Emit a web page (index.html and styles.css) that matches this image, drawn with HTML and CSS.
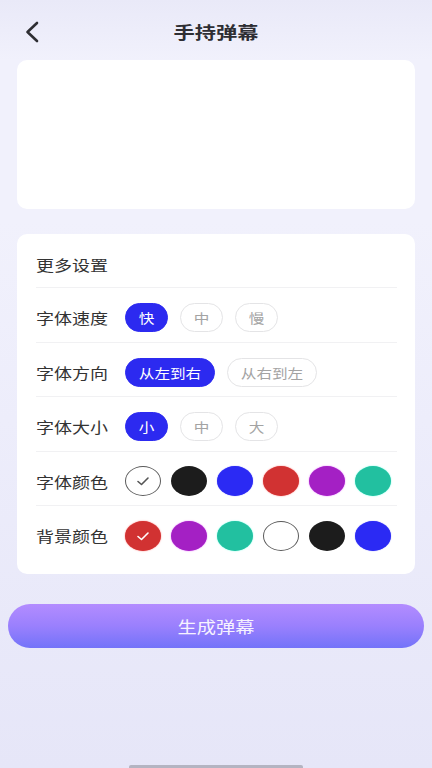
FILE: index.html
```html
<!DOCTYPE html>
<html lang="zh">
<head>
<meta charset="utf-8">
<title>手持弹幕</title>
<link rel="stylesheet" href="styles.css">
</head>
<body>
<div class="page">
  <header class="topbar">
    <div class="back">
      <svg width="16" height="22" viewBox="0 0 16 22"><path d="M13 2 L3.5 11 L13 20" fill="none" stroke="#2e2e33" stroke-width="2.6" stroke-linecap="round" stroke-linejoin="round"/></svg>
    </div>
    <h1 class="title"><span class="wx">手持弹幕</span></h1>
    <div></div>
  </header>

  <section class="card input-card"></section>

  <section class="card settings">
    <div class="settings-head"><span class="wxl">更多设置</span></div>

    <div class="row">
      <div class="label"><span class="wxl">字体速度</span></div>
      <div class="opts">
        <span class="chip on"><span class="wx">快</span></span>
        <span class="chip"><span class="wx">中</span></span>
        <span class="chip"><span class="wx">慢</span></span>
      </div>
    </div>

    <div class="row">
      <div class="label"><span class="wxl">字体方向</span></div>
      <div class="opts">
        <span class="chip long on"><span class="wx">从左到右</span></span>
        <span class="chip long"><span class="wx">从右到左</span></span>
      </div>
    </div>

    <div class="row">
      <div class="label"><span class="wxl">字体大小</span></div>
      <div class="opts">
        <span class="chip on"><span class="wx">小</span></span>
        <span class="chip"><span class="wx">中</span></span>
        <span class="chip"><span class="wx">大</span></span>
      </div>
    </div>

    <div class="row">
      <div class="label"><span class="wxl">字体颜色</span></div>
      <div class="swatches">
        <span class="dot white sel"><svg width="14" height="10" viewBox="0 0 14 10"><path d="M2 5.5 L5.5 8.5 L12 2" fill="none" stroke="#555" stroke-width="1.6" stroke-linecap="round" stroke-linejoin="round"/></svg></span>
        <span class="dot black"></span>
        <span class="dot blue"></span>
        <span class="dot red"></span>
        <span class="dot purple"></span>
        <span class="dot teal"></span>
      </div>
    </div>

    <div class="row">
      <div class="label"><span class="wxl">背景颜色</span></div>
      <div class="swatches">
        <span class="dot red sel"><svg width="14" height="10" viewBox="0 0 14 10"><path d="M2 5.5 L5.5 8.5 L12 2" fill="none" stroke="#fff" stroke-width="1.6" stroke-linecap="round" stroke-linejoin="round"/></svg></span>
        <span class="dot purple"></span>
        <span class="dot teal"></span>
        <span class="dot white"></span>
        <span class="dot black"></span>
        <span class="dot blue"></span>
      </div>
    </div>
  </section>

  <button class="make"><span class="wx">生成弹幕</span></button>

  <div class="home-bar"></div>
</div>
</body>
</html>
```

FILE: styles.css
```css
* { box-sizing: border-box; }
html, body { margin: 0; padding: 0; }
body {
  width: 432px;
  height: 768px;
  overflow: hidden;
  font-family: "Noto Sans CJK SC", "Noto Sans", sans-serif;
  color: #333;
}
.page {
  position: relative;
  width: 432px;
  height: 768px;
  background: linear-gradient(180deg, #e9e9f8 0px, #f1f1fc 60px, #f1f1fc 220px, #ededfb 420px, #e6e6f8 768px);
  display: flex;
  flex-direction: column;
  align-items: center;
}
.wx {
  display: inline-block;
  transform: scaleX(1.2);
  transform-origin: center center;
}
.wxl {
  display: inline-block;
  transform: scaleX(1.2);
  transform-origin: left center;
}
.topbar {
  width: 100%;
  height: 60px;
  padding-top: 4px;
  display: grid;
  grid-template-columns: 80px 1fr 80px;
  align-items: center;
}
.back {
  padding-left: 24px;
  display: flex;
  align-items: center;
}
.back svg { display: block; }
.title {
  margin: 0;
  text-align: center;
  font-size: 17px;
  font-weight: 700;
  color: #2e2e33;
  line-height: 24px;
}
.title .wx { transform: scaleX(1.25); }
.card {
  width: 398px;
  background: #fff;
  border-radius: 10px;
}
.input-card {
  height: 149px;
}
.settings {
  margin-top: 25px;
  padding: 0 18px 14.5px 19px;
}
.settings-head {
  padding: 20px 0 12px;
  font-size: 15px;
  line-height: 21px;
  color: #333;
}
.row {
  height: 54.5px;
  border-top: 1px solid #f1f1f3;
  padding-top: 6px;
  display: flex;
  align-items: center;
}
.label {
  width: 89px;
  flex: none;
  font-size: 15px;
  line-height: 21px;
  color: #333;
}
.opts {
  display: flex;
  gap: 12px;
}
.chip {
  width: 43px;
  height: 29px;
  border-radius: 15px;
  border: 1px solid #e4e4e6;
  color: #a3a3a3;
  font-size: 13px;
  line-height: 27px;
  text-align: center;
  white-space: nowrap;
}
.chip.long { width: 90px; }
.chip.on {
  background: #2c2af0;
  border-color: #2c2af0;
  color: #fff;
}
.swatches {
  display: flex;
  gap: 10px;
}
.dot {
  width: 36px;
  height: 30px;
  border-radius: 50%;
  display: flex;
  align-items: center;
  justify-content: center;
}
.dot.white { background: #fff; border: 1.2px solid #5a5a5a; }
.dot.black { background: #1c1c1c; }
.dot.blue { background: #2b2af4; box-shadow: 0 0 1px #6a6aff; }
.dot.red { background: #d13232; box-shadow: 0 0 1.5px #ff6a6a; }
.dot.purple { background: #a420c4; box-shadow: 0 0 1.5px #e060ff; }
.dot.teal { background: #22c0a0; box-shadow: 0 0 1.5px #60ffe0; }
.make {
  margin-top: 30px;
  width: 416px;
  height: 44px;
  border: none;
  border-radius: 22px;
  background: linear-gradient(180deg, #b38cff 0%, #9a80fd 50%, #7373f9 100%);
  color: #f6f2ff;
  font-family: "Noto Sans CJK SC", "Noto Sans", sans-serif;
  font-size: 16px;
  line-height: 44px;
  padding: 0;
}
.home-bar {
  position: absolute;
  left: 129px;
  bottom: 0;
  width: 174px;
  height: 3px;
  border-radius: 2px 2px 0 0;
  background: #b4b4c2;
}
```
